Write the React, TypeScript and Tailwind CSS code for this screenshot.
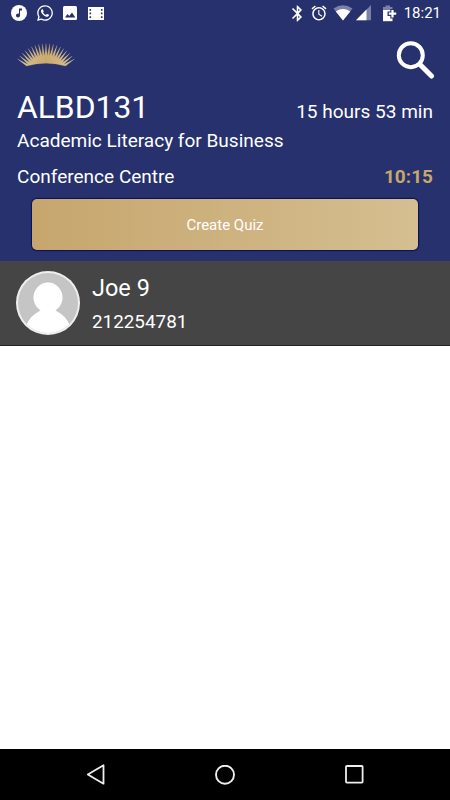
import {
  MdBluetooth,
  MdAlarm,
  MdMusicNote,
} from "react-icons/md";
import { FaWhatsapp } from "react-icons/fa";

const student = { name: "Joe 9", number: "212254781" };

const RAYS = 19;

// sunburst outline: pointed rays on an outer arc, valleys on an inner arc
const sunburstPath = () => {
  const cx = 29;
  const cy = 34.5;
  const spread = 114;
  const step = spread / (RAYS - 1);
  const at = (deg: number, r: number) => {
    const a = (deg * Math.PI) / 180;
    return `${(cx + r * Math.sin(a)).toFixed(2)} ${(cy - r * Math.cos(a)).toFixed(2)}`;
  };
  const points: string[] = [];
  for (let i = 0; i < RAYS; i++) {
    const deg = -spread / 2 + i * step;
    points.push(at(deg, 34));
    if (i < RAYS - 1) points.push(at(deg + step / 2, 22));
  }
  return `M9.5 23 L${points.join(" L")} L48.5 23 Q29 17.5 9.5 23Z`;
};

const Sunburst = () => (
  <svg width="58" height="24" viewBox="0 0 58 24">
    <defs>
      <linearGradient id="gold" x1="0" x2="1" y1="0" y2="0">
        <stop offset="0" stopColor="#dcc596" />
        <stop offset="0.5" stopColor="#c9a96e" />
        <stop offset="1" stopColor="#dcc596" />
      </linearGradient>
    </defs>
    <path d={sunburstPath()} fill="url(#gold)" stroke="url(#gold)" strokeWidth="0.2" />
  </svg>
);

const StatusBar = () => (
  <div className="flex h-[26px] items-center justify-between pl-[11px] pr-[9px]">
    <div className="flex items-center">
      <span className="flex h-4 w-4 items-center justify-center rounded-full bg-white text-[#26316d]">
        <MdMusicNote size={12} />
      </span>
      <FaWhatsapp size={18} className="ml-[9px]" />
      <svg className="ml-[9px]" width="14" height="14" viewBox="0 0 14 14">
        <rect width="14" height="14" rx="1.5" fill="#fff" />
        <path d="M2 11.5 L4.5 8 L6.3 10 L9 6.5 L12.3 11.5Z" fill="#26316d" />
      </svg>
      <svg className="ml-[11px]" width="16" height="13" viewBox="0 0 16 13">
        <rect width="16" height="13" fill="#fff" />
        <path
          d="M1.5 2h1.6v1.7H1.5zM1.5 5.6h1.6v1.7H1.5zM1.5 9.2h1.6v1.7H1.5zM12.9 2h1.6v1.7h-1.6zM12.9 5.6h1.6v1.7h-1.6zM12.9 9.2h1.6v1.7h-1.6z"
          fill="#26316d"
        />
      </svg>
    </div>
    <div className="flex items-center">
      <MdBluetooth size={19} />
      <MdAlarm size={18} className="ml-[3px]" />
      <svg className="ml-[5px]" width="20" height="16" viewBox="0 0 20 16">
        <path d="M0.5 3.5 Q10 -3 19.5 3.5 L10 15.5Z" fill="#7a80a8" />
        <path d="M2.8 6.4 Q10 1.8 17.2 6.4 L10 15.5Z" fill="#fff" />
      </svg>
      <svg className="ml-[3px]" width="15" height="16" viewBox="0 0 15 16">
        <path d="M15 0 V15.3 H0Z" fill="#7a80a8" />
        <path d="M10.5 4.6 V15.3 H0Z" fill="#fff" />
      </svg>
      <svg className="ml-[11px]" width="15" height="17" viewBox="0 0 15 17">
        <path d="M3.5 0.5h4.5v1.5h2.5v3H1V2h2.5z" fill="#7a80a8" />
        <path d="M1 5H10.5V16.2H1z" fill="#fff" />
        <path d="M10.5 4V13.5M5.5 8.7H15" stroke="#26316d" strokeWidth="4.4" />
        <path d="M10.5 5V12.4M6.8 8.7H14.2" stroke="#fff" strokeWidth="2.2" />
      </svg>
      <span className="ml-[7px] text-[15px] leading-[18px]">18:21</span>
    </div>
  </div>
);

const Header = () => (
  <header className="h-[261px] bg-[#26316d] text-white">
    <StatusBar />
    <div className="flex h-[64px] items-start justify-between pl-[17px] pr-[15px]">
      <div className="pt-[17px]">
        <Sunburst />
      </div>
      <svg className="mt-[14px]" width="39" height="39" viewBox="0 0 39 39">
        <circle cx="14.8" cy="15.2" r="12" fill="none" stroke="#fff" strokeWidth="4" />
        <path d="M24 24.5 L35.5 36" stroke="#fff" strokeWidth="5" strokeLinecap="round" />
      </svg>
    </div>
    <div className="px-[17px]">
      <div className="flex items-baseline justify-between">
        <h1 className="text-[31.8px] leading-[35px]">ALBD131</h1>
        <span className="text-[19.05px] leading-6">15 hours 53 min</span>
      </div>
      <p className="mt-1 text-[19.05px] leading-6">Academic Literacy for Business</p>
      <div className="mt-3 flex justify-between text-[19.05px] leading-6">
        <span>Conference Centre</span>
        <span className="font-bold text-[#c7a76c]">10:15</span>
      </div>
    </div>
    <button className="mx-8 mt-[10px] block h-[51px] w-[386px] rounded-[5px] bg-linear-to-r from-[#c6a66d] to-[#d5be90] pt-[2px] text-[15px] text-white shadow-[0_0_1px_1px_#0a1058]">
      Create Quiz
    </button>
  </header>
);

const Avatar = () => (
  <svg width="64" height="64" viewBox="0 0 64 64">
    <defs>
      <clipPath id="face">
        <circle cx="32" cy="32" r="30" />
      </clipPath>
    </defs>
    <circle cx="32" cy="32" r="32" fill="#efefef" />
    <g clipPath="url(#face)">
      <rect width="64" height="64" fill="#c5c5c5" />
      <ellipse cx="32" cy="26.5" rx="14.5" ry="15" fill="#fff" />
      <path d="M24 34 L26 37 Q25.5 39.5 22 41 Q14 45 10.5 54 V64 H53.5 V54 Q50 45 42 41 Q38.5 39.5 38 37 L40 34Z" fill="#fff" />
    </g>
  </svg>
);

const StudentRow = () => (
  <div className="flex h-[85px] border-b border-[#222] bg-[#454545] pl-[16px] pt-[10px] text-white">
    <Avatar />
    <div className="ml-3">
      <div className="pt-[3px] text-[23.5px] leading-7">{student.name}</div>
      <div className="mt-[8px] text-[18.85px] leading-6">{student.number}</div>
    </div>
  </div>
);

const NavBar = () => (
  <nav className="flex h-[51px] items-center justify-between bg-black pl-[86px] pr-[86px]">
    <svg width="20" height="22" viewBox="0 0 20 22">
      <path d="M1.8 10.5 L17.5 1.3 V19.7Z" fill="none" stroke="#eee" strokeWidth="1.8" strokeLinejoin="round" />
    </svg>
    <svg className="-ml-[2px]" width="20" height="20" viewBox="0 0 20 20">
      <circle cx="10" cy="9.7" r="9" fill="none" stroke="#eee" strokeWidth="1.9" />
    </svg>
    <svg width="19" height="19" viewBox="0 0 19 19">
      <rect x="1" y="1" width="16.6" height="16.6" rx="0.8" fill="none" stroke="#eee" strokeWidth="1.8" />
    </svg>
  </nav>
);

export default function App() {
  return (
    <div className="flex h-[800px] w-[450px] flex-col bg-white font-[Roboto,sans-serif]">
      <Header />
      <StudentRow />
      <main className="flex-1" />
      <NavBar />
    </div>
  );
}
